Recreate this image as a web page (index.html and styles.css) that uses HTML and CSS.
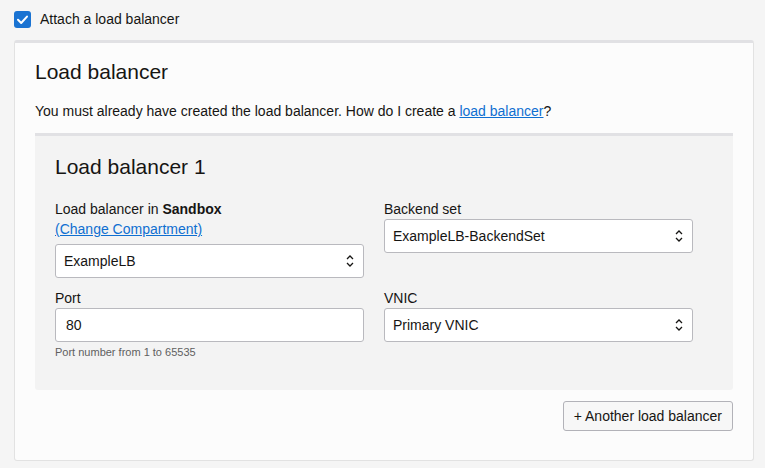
FILE: index.html
```html
<!DOCTYPE html>
<html lang="en">
<head>
<meta charset="utf-8">
<title>Attach a load balancer</title>
<link rel="stylesheet" href="styles.css">
</head>
<body>
<div class="check-row">
  <span class="checkbox">
    <svg width="17" height="17" viewBox="0 0 17 17"><polyline points="4,8.8 7.2,12 13,5.6" fill="none" stroke="#fff" stroke-width="2" stroke-linecap="round" stroke-linejoin="round"/></svg>
  </span>
  <span class="check-label">Attach a load balancer</span>
</div>
<section class="card">
  <h2 class="card-title">Load balancer</h2>
  <p class="card-text">You must already have created the load balancer. How do I create a <a href="#" class="link">load balancer</a>?</p>
  <div class="panel">
    <h3 class="panel-title">Load balancer 1</h3>
    <div class="fields">
      <div class="field">
        <div class="label">Load balancer in <b>Sandbox</b></div>
        <div class="label sublink"><a href="#" class="link">(Change Compartment)</a></div>
        <div class="select"><span>ExampleLB</span>
          <svg class="chev" width="8" height="14" viewBox="0 0 8 14"><polyline points="1,5 4,2 7,5" fill="none" stroke="#161513" stroke-width="1.3"/><polyline points="1,9 4,12 7,9" fill="none" stroke="#161513" stroke-width="1.3"/></svg>
        </div>
      </div>
      <div class="field">
        <div class="label">Backend set</div>
        <div class="select"><span>ExampleLB-BackendSet</span>
          <svg class="chev" width="8" height="14" viewBox="0 0 8 14"><polyline points="1,5 4,2 7,5" fill="none" stroke="#161513" stroke-width="1.3"/><polyline points="1,9 4,12 7,9" fill="none" stroke="#161513" stroke-width="1.3"/></svg>
        </div>
      </div>
      <div class="field">
        <div class="label">Port</div>
        <div class="input">80</div>
        <div class="hint">Port number from 1 to 65535</div>
      </div>
      <div class="field">
        <div class="label">VNIC</div>
        <div class="select"><span>Primary VNIC</span>
          <svg class="chev" width="8" height="14" viewBox="0 0 8 14"><polyline points="1,5 4,2 7,5" fill="none" stroke="#161513" stroke-width="1.3"/><polyline points="1,9 4,12 7,9" fill="none" stroke="#161513" stroke-width="1.3"/></svg>
        </div>
      </div>
    </div>
  </div>
  <div class="actions">
    <button class="btn" type="button">+ Another load balancer</button>
  </div>
</section>
</body>
</html>
```
FILE: styles.css
```css
* { box-sizing: border-box; }
body {
  margin: 0;
  padding: 9px 11px 0 14px;
  background: #f5f5f5;
  font-family: "Liberation Sans", Arial, sans-serif;
  font-size: 14px;
  line-height: 20px;
  color: #161513;
}
.check-row {
  display: flex;
  align-items: center;
  gap: 9px;
  height: 20px;
  margin-bottom: 11px;
}
.checkbox {
  width: 17px;
  height: 17px;
  border-radius: 3px;
  background: #1a73d2;
  display: flex;
}
.card {
  width: 740px;
  background: #fcfcfc;
  border: 1px solid #e2e2e2;
  border-top: 3px solid #e1e1e4;
  border-radius: 3px;
  padding: 17px 20px 29px 20px;
}
.card-title {
  margin: 0;
  font-size: 21px;
  line-height: 24px;
  font-weight: normal;
}
.card-text {
  margin: 17px 0 12px;
}
.link {
  color: #0f6fd1;
  text-decoration: underline;
}
.panel {
  background: #f3f3f3;
  border-top: 3px solid #e1e1e4;
  border-radius: 0 0 3px 3px;
  padding: 19px 20px 30px;
}
.panel-title {
  margin: 0 0 20px;
  font-size: 21px;
  line-height: 24px;
  font-weight: normal;
}
.fields {
  display: grid;
  grid-template-columns: 309px 309px;
  column-gap: 20px;
  row-gap: 10px;
  align-items: start;
}
.field { display: flex; flex-direction: column; }
.label { line-height: 20px; }
.label b { font-weight: bold; }
.sublink { margin-bottom: 5px; }
.select, .input {
  height: 34px;
  background: #fff;
  border: 1px solid #b9b9be;
  border-radius: 3px;
  display: flex;
  align-items: center;
  justify-content: space-between;
  padding: 0 9px 0 8px;
}
.input { padding-left: 10px; }
.chev { flex: none; }
.hint {
  margin-top: 2px;
  font-size: 11px;
  line-height: 16px;
  color: #5f5f5f;
}
.actions {
  display: flex;
  justify-content: flex-end;
  margin-top: 11px;
}
.btn {
  height: 30px;
  padding: 0 10px;
  font-family: inherit;
  font-size: 14px;
  color: #161513;
  background: #f7f7f7;
  border: 1px solid #b2b2b8;
  border-radius: 3px;
}
```
